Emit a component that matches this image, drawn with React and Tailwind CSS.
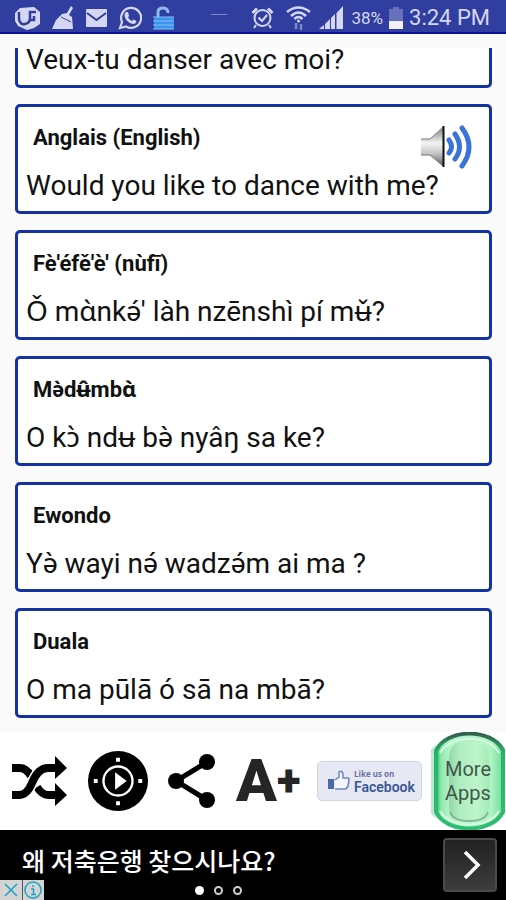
import React from 'react';

const phrases = [
  { text: 'Veux-tu danser avec moi?' },
  { lang: 'Anglais (English)', text: 'Would you like to dance with me?', audio: true },
  { lang: "Fè'éfě'è' (nùfī)", text: "Ǒ mɑ̀nkə́' làh nzēnshì pí mʉ̌?" },
  { lang: 'Mə̀dʉ̂mbɑ̀', text: 'O kɔ̀ ndʉ bə̀ nyâŋ sa ke?' },
  { lang: 'Ewondo', text: 'Yə̀ wayi nə́ wadzə́m ai ma ?' },
  { lang: 'Duala', text: 'O ma pūlā ó sā na mbā?' },
];

function StatusBar() {
  return (
    <header className="flex h-[34px] shrink-0 items-center justify-between border-b-2 border-[#0b109c] bg-[#303f9f] pt-1 pr-4 pl-[14px] text-[#d5d7f2]">
      <div className="flex items-center gap-[10px]">
        <svg width="27" height="24" viewBox="0 0 27 24" aria-hidden="true">
          <path d="M6 2 L20 1 L26 6 L26 18 L20 22 L13 24 L4 20 L1 15 L1 7 Z" fill="currentColor" />
          <path d="M5 6 V13 Q6 19 11 18 Q16 17 16 12 V6 H22 M16 14 H20 V10" fill="none" stroke="#303f9f" strokeWidth="2.5" />
        </svg>
        <svg width="24" height="24" viewBox="0 0 24 24" fill="currentColor" aria-hidden="true">
          <path d="M20 0 L22 2 L18 9 L21 11 L22 23 H1 L5 14 L11 8 L16 7 Z" />
          <path d="M10 11 L20 16" stroke="#303f9f" strokeWidth="1" />
        </svg>
        <svg width="23" height="20" viewBox="0 0 23 20" aria-hidden="true">
          <rect x="1" y="1" width="21" height="18" rx="1" fill="currentColor" />
          <path d="M2 5 L11.500 12 L21 5" fill="none" stroke="#303f9f" strokeWidth="2" />
        </svg>
        <svg width="24" height="24" viewBox="0 0 24 24" aria-hidden="true">
          <path d="M2 22 L4 16 A10 10 0 1 1 8 20.500 Z" fill="none" stroke="currentColor" strokeWidth="2.200" />
          <path d="M8 6 L10 6 L11 10 L10 11.500 Q11.500 14 14 15 L15.500 13.500 L18.500 15 Q18 18 15 18 Q8 16.500 6.500 10 Q6.500 7 8 6 Z" fill="currentColor" />
        </svg>
        <svg width="24" height="24" viewBox="0 0 24 24" aria-hidden="true">
          <path d="M6 12 V6 Q6 2 11 2 Q16 2 16 7" fill="none" stroke="#8fb9ee" strokeWidth="3" />
          <rect x="2" y="11" width="20" height="12" fill="#3d94ee" />
          <path d="M1 11 H22 M1 15 H22 M1 19 H22 M1 23 H22" stroke="#86c0f7" strokeWidth="1" />
        </svg>
        <span className="mb-2 ml-[25px] h-px w-4 bg-[#7f88cc]" />
      </div>
      <div className="flex items-center">
        <svg className="mr-3" width="23" height="24" viewBox="0 0 23 24" fill="none" stroke="currentColor" strokeWidth="2" aria-hidden="true">
          <circle cx="11.500" cy="12" r="8" />
          <path d="M1.500 7 L6 2.500 M21.500 7 L17 2.500" strokeWidth="3" />
          <path d="M5 19 L3 22 M18 19 L20 22 M7.500 11.500 L11 15 L16 9" />
        </svg>
        <svg className="mr-2" width="25" height="26" viewBox="0 0 25 26" fill="none" stroke="currentColor" strokeWidth="2.500" aria-hidden="true">
          <path d="M1 7 Q12.500 -2 24 7 M5 11 Q12.500 4 20 11 M8.500 14 Q12.500 10 16.500 14" />
          <circle cx="12.500" cy="16" r="1.500" fill="currentColor" stroke="none" />
          <path d="M10 24 V18 M15 19 V25" stroke="#7f88cc" />
        </svg>
        <svg className="mr-[7px]" width="25" height="24" viewBox="0 0 25 24" fill="currentColor" aria-hidden="true">
          <path d="M0 23 L5 19 V23 Z M6 18 L11 13 V23 H6 Z M12 12 L16 8 V23 H12 Z M17.500 7 L24 0 V23 H17.500 Z" />
        </svg>
        <span className="text-[17px] leading-6">38%</span>
        <svg className="mx-[6px]" width="14" height="24" viewBox="0 0 14 24" aria-hidden="true">
          <path d="M4 1 H10 V3 H14 V23 H0 V3 H4 Z" fill="#6670bd" />
          <rect y="15" width="14" height="8" fill="#f1f1fb" />
        </svg>
        <span className="text-[22px] leading-6">3:24 PM</span>
      </div>
    </header>
  );
}

function SpeakerIcon() {
  return (
    <svg width="52" height="44" viewBox="0 0 52 44" aria-hidden="true">
      <defs>
        <linearGradient id="cone" x1="0" y1="0" x2="0" y2="1">
          <stop offset="0" stopColor="#777777" />
          <stop offset="0.4" stopColor="#f4f4f4" />
          <stop offset="0.650" stopColor="#c8c8c8" />
          <stop offset="1" stopColor="#555555" />
        </linearGradient>
      </defs>
      <path d="M0 14 H9 L23 2 V42 L9 30 H0 Z" fill="url(#cone)" />
      <path d="M0 14 H9 L22 2 M0 30 H9 L22 41" fill="none" stroke="#777777" strokeWidth="1" />
      <path d="M22.500 1 V42" stroke="#111111" strokeWidth="2" />
      <g fill="none" stroke="#3b74d8" strokeWidth="5" strokeLinecap="round">
        <path d="M28 15 Q33 22 28 28" />
        <path d="M34 9 Q43 22 34 34" />
        <path d="M41 3 Q55 22 41 41" />
      </g>
    </svg>
  );
}

function PhraseCard({ phrase }) {
  return (
    <li className="shrink-0 rounded-[5px] border-[3px] border-[#1432a4] bg-white pr-4 pb-2 pl-2">
      <div className="flex h-[62px] items-center justify-between pl-[7px]">
        {phrase.lang && <h2 className="text-[22px] leading-7 font-bold">{phrase.lang}</h2>}
        {phrase.audio && (
          <button type="button" aria-label="Play" className="cursor-pointer self-end">
            <SpeakerIcon />
          </button>
        )}
      </div>
      <p className="text-[28px] leading-[34px] whitespace-nowrap">{phrase.text}</p>
    </li>
  );
}

function Toolbar() {
  return (
    <nav className="flex h-[98px] shrink-0 items-center justify-between bg-white pl-3">
      <div className="flex items-center gap-5">
        <button type="button" aria-label="Shuffle" className="cursor-pointer">
          <svg width="56" height="50" viewBox="0 0 56 50" aria-hidden="true">
            <g fill="none" stroke="#000000" strokeWidth="8">
              <path d="M0 12 H8 Q14 12 19 20 M25 31 Q30 39 36 39 H45" />
              <path d="M0 39 H7 Q15 39 20 27 Q26 12 36 12 H45" stroke="#ffffff" strokeWidth="11" />
              <path d="M0 39 H7 Q15 39 20 27 Q26 12 36 12 H45" />
            </g>
            <path d="M43 0 L55 12 L43 23 Z M43 27 L55 39 L43 50 Z" />
          </svg>
        </button>
        <button type="button" aria-label="Autoplay" className="cursor-pointer">
          <svg width="60" height="62" viewBox="0 0 62 62" aria-hidden="true">
            <circle cx="31" cy="31" r="31" />
            <circle cx="31" cy="31" r="15" fill="none" stroke="#ffffff" strokeWidth="2.500" />
            <path d="M28 22 L40 31 L28 40 Z M29 7 H33 V11 H29 Z M29 52 H33 V56 H29 Z M6 29 H10 V33 H6 Z M52 29 H56 V33 H52 Z" fill="#ffffff" />
          </svg>
        </button>
        <button type="button" aria-label="Share" className="cursor-pointer">
          <svg width="48" height="54" viewBox="0 0 48 54" aria-hidden="true">
            <path d="M39 8 L8 27 L39 46" fill="none" stroke="#000000" strokeWidth="5" />
            <circle cx="8" cy="27" r="8" />
            <circle cx="39" cy="8" r="8" />
            <circle cx="39" cy="46" r="8" />
          </svg>
        </button>
        <button type="button" aria-label="Larger text" className="flex cursor-pointer items-center font-black text-[#252525]">
          <span className="text-[60px] leading-[60px]">A</span>
          <span className="text-[44px] leading-[60px]">+</span>
        </button>
      </div>
      <div className="flex h-full items-center gap-2">
        <a href="#facebook" className="flex h-10 w-[105px] items-center gap-1 rounded-[5px] border border-[#cfd3e6] bg-[#e6e8f4] pl-[9px] text-[#3b5998]">
          <svg width="23" height="22" viewBox="0 0 23 22" aria-hidden="true">
            <rect x="1" y="9" width="6" height="10" fill="#4a69a8" />
            <path d="M8 10 L12 7 V2 Q15 0 16 4 V8 H21 Q23 9 21.500 11 Q22.500 13 21 14 Q21.500 17 20 17 Q20 19 18 19 H8" fill="#f4f6fc" stroke="#6d86bb" strokeWidth="1.500" />
          </svg>
          <span className="flex flex-col font-['Open_Sans','Noto_Sans',sans-serif]">
            <span className="text-[8px] leading-[11px] font-bold whitespace-nowrap text-[#6b70a3]">Like us on</span>
            <span className="font-[Roboto,sans-serif] text-[14px] leading-4 font-semibold">Facebook</span>
          </span>
        </a>
        <button
          type="button"
          className="relative flex h-full w-[76px] cursor-pointer items-center justify-center text-[20px] leading-6 text-[#3f5749]"
        >
          <svg className="absolute inset-0" width="76" height="98" viewBox="0 0 76 98" aria-hidden="true">
            <defs>
              <linearGradient id="glass" x1="0" y1="0" x2="1" y2="0">
                <stop offset="0" stopColor="#35b870" />
                <stop offset="0.080" stopColor="#8fe8ae" />
                <stop offset="0.200" stopColor="#b4f5c8" />
                <stop offset="0.820" stopColor="#aef4c3" />
                <stop offset="1" stopColor="#6fdc99" />
              </linearGradient>
              <linearGradient id="shine" x1="0" y1="0" x2="1" y2="0">
                <stop offset="0" stopColor="#93d6a8" />
                <stop offset="0.250" stopColor="#aeecbf" />
                <stop offset="0.700" stopColor="#bdf6ca" />
                <stop offset="1" stopColor="#a4eab8" />
              </linearGradient>
              <linearGradient id="rim" x1="0" y1="0" x2="0" y2="1">
                <stop offset="0" stopColor="#33604c" />
                <stop offset="0.200" stopColor="#28b468" />
                <stop offset="1" stopColor="#2fbd72" />
              </linearGradient>
            </defs>
            <path d="M1 18 Q2 15 6 13 V86 Q2 84 1 81 Z" fill="#b9ead0" />
            <path d="M6 19 C16 -4 62 -4 73 18 V80 C62 102 16 102 6 80 Z" fill="url(#glass)" stroke="url(#rim)" strokeWidth="4" />
            <path d="M10 21 C20 2 59 2 69 21 M10 79 C20 97 59 97 69 79" fill="none" stroke="#d9fbe4" strokeWidth="2" />
            <path d="M19 24 Q20 9 39 9 Q58 9 59 24 V76 Q58 89 39 89 Q20 89 19 76 Z" fill="url(#shine)" />
            <path d="M20 80 Q23 89 39 89 Q55 89 58 80" fill="none" stroke="#86b596" strokeWidth="2" />
          </svg>
          <span className="relative">
            More
            <br />
            Apps
          </span>
        </button>
      </div>
    </nav>
  );
}

function AdBanner() {
  return (
    <aside className="flex h-[70px] shrink-0 items-center bg-black pr-[9px] text-white">
      <div className="flex h-full flex-1 flex-col">
        <p className="flex-1 pt-3 pl-[22px] font-['Noto_Sans_CJK_KR',sans-serif] text-[25px] leading-9 font-medium whitespace-nowrap">
          왜 저축은행 찾으시나요?
        </p>
        <div className="grid grid-cols-[44px_1fr_50px] items-end">
          <div className="flex gap-px bg-[#555555]">
            <button type="button" aria-label="Close ad" className="flex h-5 flex-1 cursor-pointer items-center justify-center bg-[#d4d4d4]">
              <svg width="14" height="14" viewBox="0 0 14 14" stroke="#1ca3c4" strokeWidth="1.500" aria-hidden="true">
                <path d="M1 1 L13 13 M13 1 L1 13" />
              </svg>
            </button>
            <button type="button" aria-label="Ad info" className="flex h-5 flex-1 cursor-pointer items-center justify-center bg-[#d4d4d4]">
              <svg width="18" height="18" viewBox="0 0 18 18" fill="none" stroke="#1ca3c4" strokeWidth="1.500" aria-hidden="true">
                <circle cx="9" cy="9" r="8" />
                <path d="M7 8 H9.500 V13 M7 13.500 H12 M8 5 H10" />
              </svg>
            </button>
          </div>
          <div className="flex h-5 items-center justify-center gap-[10px]">
            <span className="size-[9px] rounded-full bg-white" />
            <span className="size-[9px] rounded-full border-2 border-[#d0d0d0]" />
            <span className="size-[9px] rounded-full border-2 border-[#d0d0d0]" />
          </div>
        </div>
      </div>
      <button
        type="button"
        aria-label="Open ad"
        className="flex size-[54px] cursor-pointer items-center justify-center rounded-[4px] border-2 border-[#4a4a4a] bg-linear-to-b from-[#222222] to-[#3d3d3d]"
      >
        <svg className="ml-1" width="18" height="28" viewBox="0 0 18 28" fill="none" stroke="#ffffff" strokeWidth="3.500" aria-hidden="true">
          <path d="M2 1 L15 14 L2 27" />
        </svg>
      </button>
    </aside>
  );
}

function App() {
  return (
    <div className="flex h-screen flex-col bg-[#fafafa] font-[Roboto,'Noto_Sans',sans-serif] text-[#111111]">
      <StatusBar />
      <main className="flex min-h-0 flex-1 flex-col py-[14px] pr-[14px] pl-[15px]">
        <ul className="flex min-h-0 flex-1 flex-col justify-end gap-4 overflow-hidden">
          {phrases.map((phrase) => (
            <PhraseCard key={phrase.text} phrase={phrase} />
          ))}
        </ul>
      </main>
      <Toolbar />
      <AdBanner />
    </div>
  );
}

export default App;
